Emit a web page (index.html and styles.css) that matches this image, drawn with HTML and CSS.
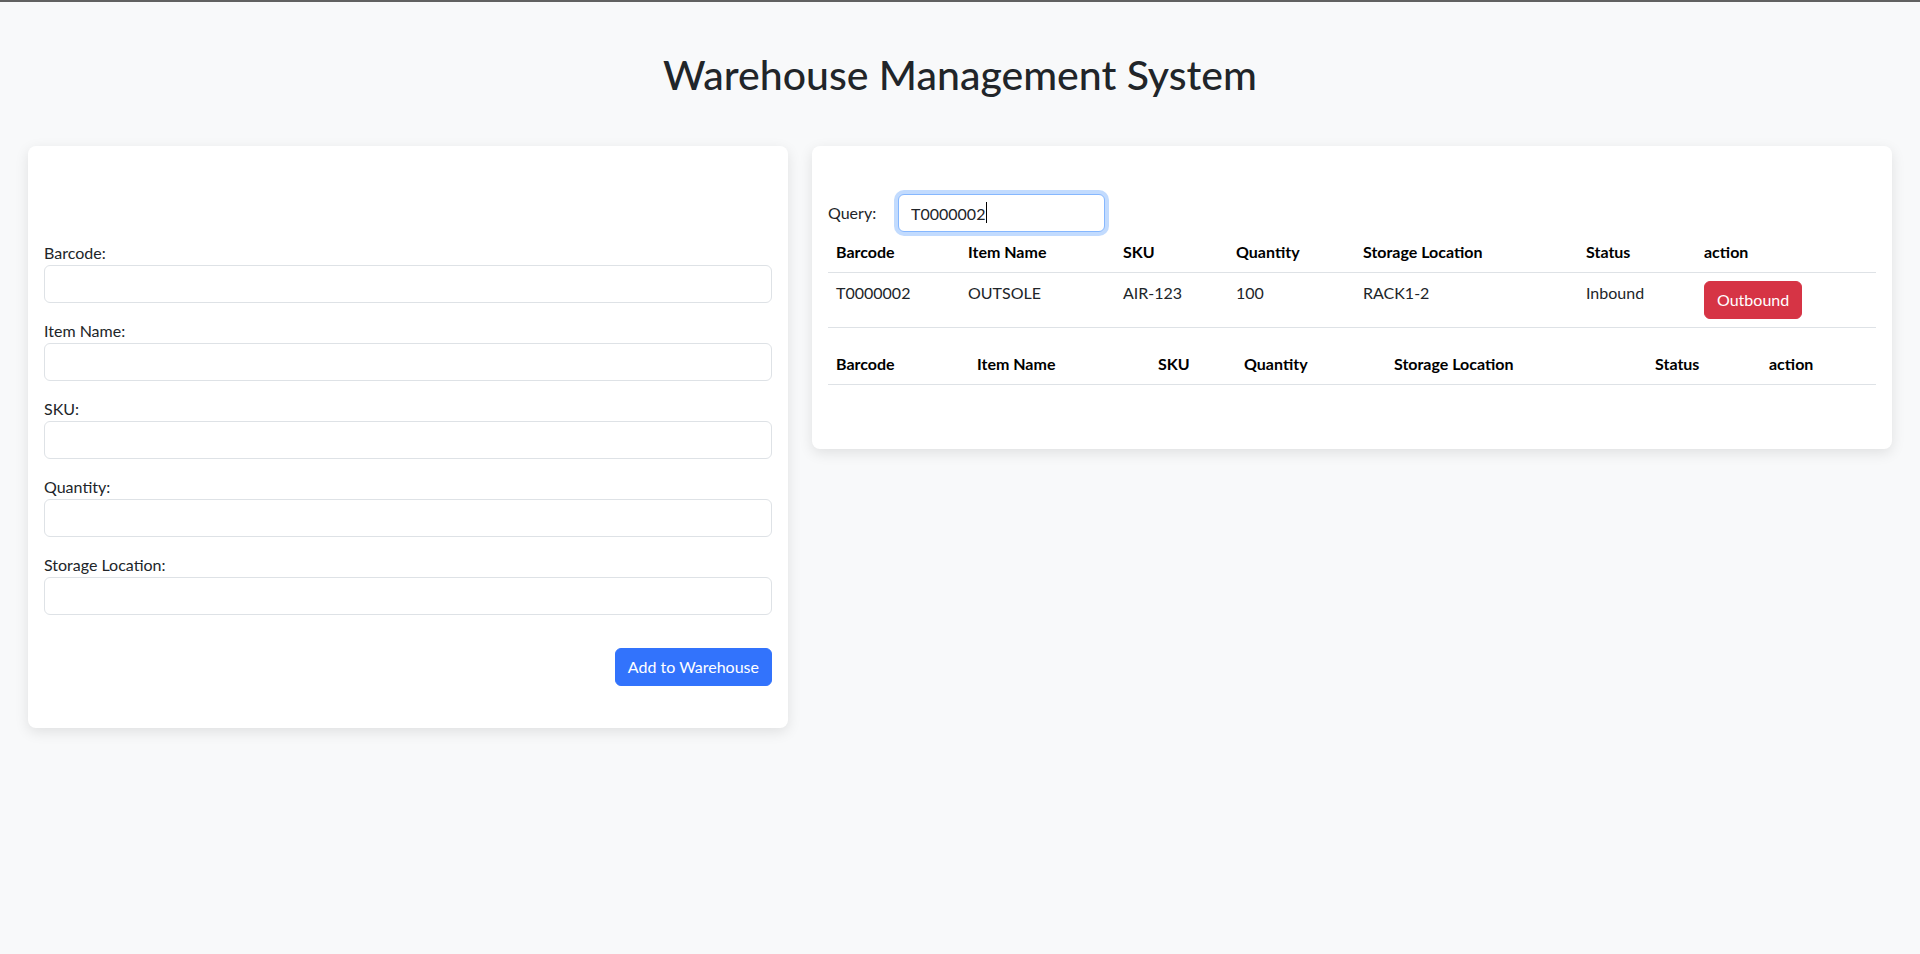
FILE: index.html
```html
<!DOCTYPE html>
<html lang="en">
<head>
<meta charset="utf-8">
<title>Warehouse Management System</title>
<link rel="stylesheet" href="styles.css">
</head>
<body>
<div class="page">
  <h1 class="title">Warehouse Management System</h1>
  <div class="layout">
    <section class="card card-form">
      <form class="form">
        <div class="field">
          <label class="field-label" for="barcode">Barcode:</label>
          <input class="field-input" id="barcode" type="text">
        </div>
        <div class="field">
          <label class="field-label" for="itemName">Item Name:</label>
          <input class="field-input" id="itemName" type="text">
        </div>
        <div class="field">
          <label class="field-label" for="sku">SKU:</label>
          <input class="field-input" id="sku" type="text">
        </div>
        <div class="field">
          <label class="field-label" for="quantity">Quantity:</label>
          <input class="field-input" id="quantity" type="text">
        </div>
        <div class="field">
          <label class="field-label" for="location">Storage Location:</label>
          <input class="field-input" id="location" type="text">
        </div>
        <div class="form-actions">
          <button type="button" class="btn btn-primary">Add to Warehouse</button>
        </div>
      </form>
    </section>

    <section class="card card-list">
      <div class="query">
        <label class="query-label" for="query">Query:</label>
        <div class="query-box">
          <input class="query-input is-focused" id="query" type="text" value="T0000002">
          <span class="caret"></span>
        </div>
      </div>

      <table class="table">
        <colgroup>
          <col class="c1-barcode"><col class="c1-name"><col class="c1-sku"><col class="c1-qty"><col class="c1-loc"><col class="c1-status"><col class="c1-action">
        </colgroup>
        <thead>
          <tr><th>Barcode</th><th>Item Name</th><th>SKU</th><th>Quantity</th><th>Storage Location</th><th>Status</th><th>action</th></tr>
        </thead>
        <tbody>
          <tr>
            <td>T0000002</td><td>OUTSOLE</td><td>AIR-123</td><td>100</td><td>RACK1-2</td><td>Inbound</td>
            <td><button type="button" class="btn btn-danger">Outbound</button></td>
          </tr>
        </tbody>
      </table>

      <table class="table">
        <colgroup>
          <col class="c2-barcode"><col class="c2-name"><col class="c2-sku"><col class="c2-qty"><col class="c2-loc"><col class="c2-status"><col class="c2-action">
        </colgroup>
        <thead>
          <tr><th>Barcode</th><th>Item Name</th><th>SKU</th><th>Quantity</th><th>Storage Location</th><th>Status</th><th>action</th></tr>
        </thead>
        <tbody></tbody>
      </table>
    </section>
  </div>
</div>
</body>
</html>
```
FILE: styles.css
```css
* { box-sizing: border-box; }

html, body {
  margin: 0;
  padding: 0;
}

body {
  background: #f8f9fa;
  border-top: 2px solid #616161;
  font-family: Lato, "Open Sans", "Liberation Sans", sans-serif;
  font-size: 16px;
  line-height: 1.5;
  color: #212529;
  min-height: 954px;
}

.page {
  padding: 49px 28px 0;
}

.title {
  margin: 0 0 47px;
  text-align: center;
  font-size: 41px;
  font-weight: 500;
  line-height: 48px;
  color: #212529;
}

.layout {
  display: grid;
  grid-template-columns: 760px 1fr;
  gap: 24px;
  align-items: start;
}

.card {
  background: #fff;
  border-radius: 8px;
  box-shadow: 0 4px 14px rgba(0, 0, 0, 0.1);
}

.card-form {
  padding: 95px 16px 42px;
}

.field {
  margin-bottom: 16px;
}

.field-label {
  display: block;
  line-height: 24px;
  font-size: 16px;
}

.field-input {
  display: block;
  width: 100%;
  height: 38px;
  padding: 6px 12px;
  font: inherit;
  color: #212529;
  background: #fff;
  border: 1px solid #dee2e6;
  border-radius: 6px;
  outline: none;
}

.form-actions {
  padding-top: 17px;
  text-align: right;
}

.btn {
  display: inline-block;
  height: 38px;
  padding: 6px 12px;
  font: inherit;
  line-height: 24px;
  color: #fff;
  border: 1px solid transparent;
  border-radius: 6px;
  cursor: pointer;
}

.btn-primary {
  background: #3273fc;
  border-color: #3273fc;
}

.btn-danger {
  background: #d63445;
  border-color: #d63445;
}

.card-list {
  padding: 48px 16px;
}

.query {
  display: flex;
  align-items: center;
}

.query-label {
  width: 70px;
  line-height: 24px;
}

.query-box {
  position: relative;
  width: 207px;
}

.query-input {
  display: block;
  width: 100%;
  height: 38px;
  padding: 6px 12px;
  font: inherit;
  color: #212529;
  background: #fff;
  border: 1px solid #dee2e6;
  border-radius: 6px;
  outline: none;
}

.query-input.is-focused {
  border-color: #86b7fe;
  box-shadow: 0 0 0 4px rgba(13, 110, 253, 0.25);
}

.caret {
  position: absolute;
  left: 88px;
  top: 8px;
  width: 1px;
  height: 21px;
  background: #000;
}

.table {
  width: 100%;
  table-layout: fixed;
  border-collapse: collapse;
  margin-bottom: 16px;
  text-align: left;
}

.table th,
.table td {
  padding: 8px;
  vertical-align: top;
  border-bottom: 1px solid #dee2e6;
  line-height: 24px;
}

.table th {
  font-weight: 700;
  color: #000;
}

.table td {
  color: #212529;
}

.c1-barcode { width: 132px; }
.c1-name { width: 155px; }
.c1-sku { width: 113px; }
.c1-qty { width: 127px; }
.c1-loc { width: 223px; }
.c1-status { width: 118px; }
.c1-action { width: 180px; }

.c2-barcode { width: 141px; }
.c2-name { width: 181px; }
.c2-sku { width: 86px; }
.c2-qty { width: 150px; }
.c2-loc { width: 261px; }
.c2-status { width: 114px; }
.c2-action { width: 115px; }
```
